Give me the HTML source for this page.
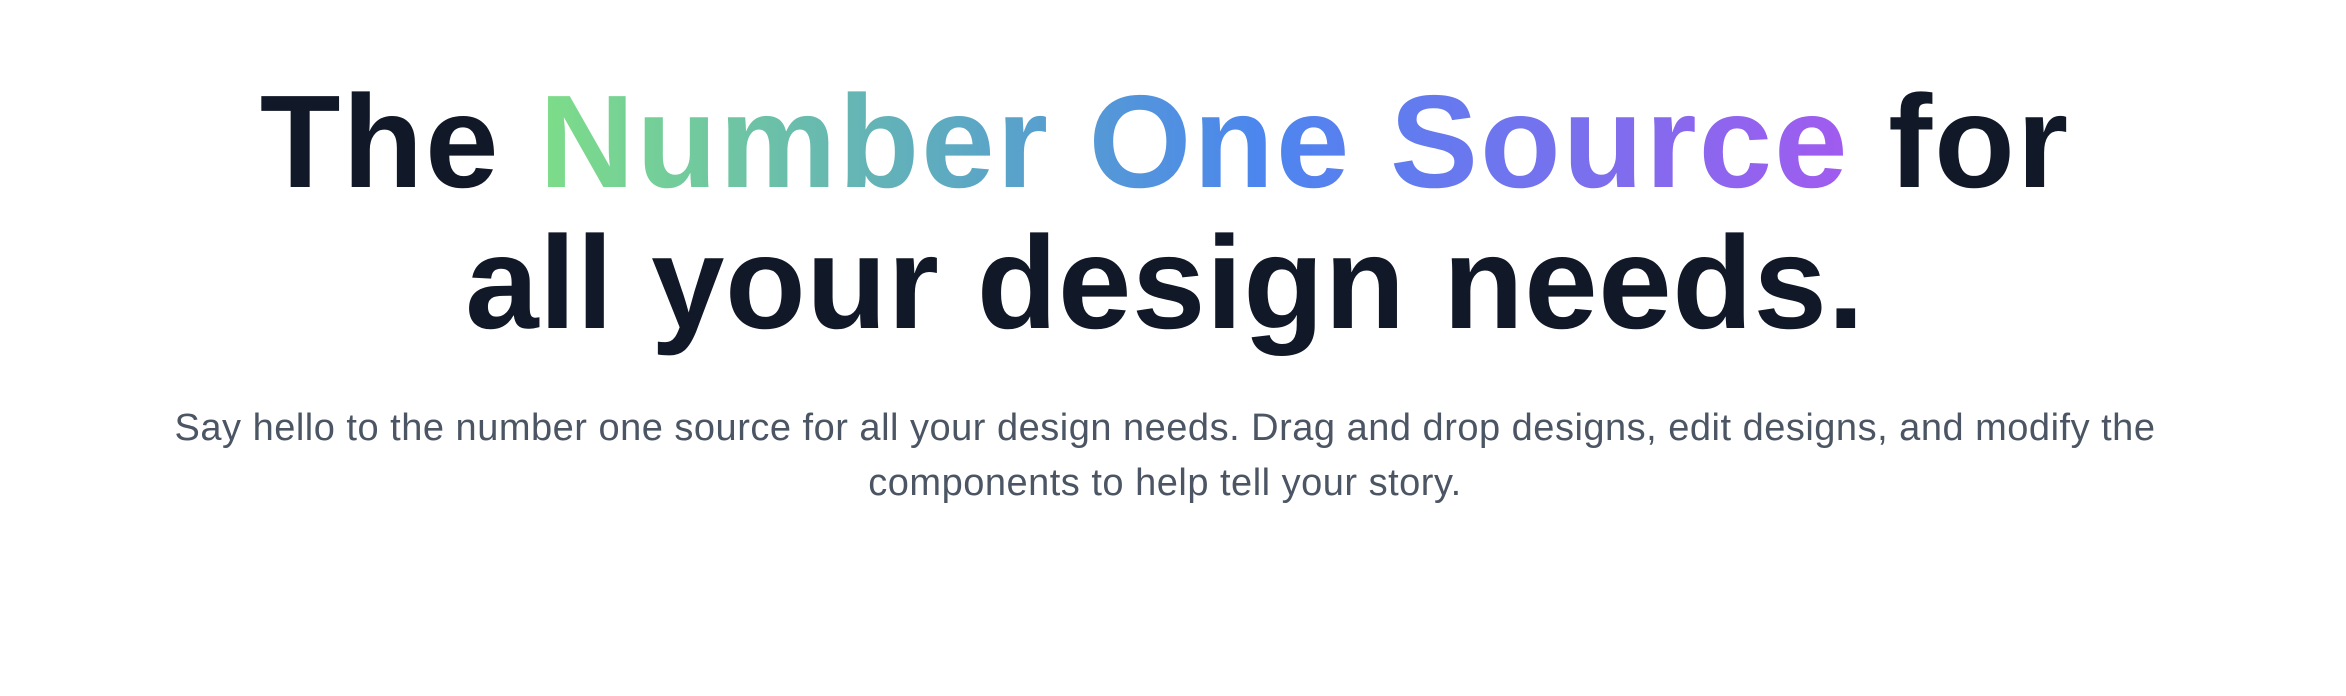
<!DOCTYPE html>
<html><head><style>
html,body{margin:0;padding:0;background:#fff;width:2346px;height:696px;overflow:hidden}
h1{position:absolute;left:0;width:2330px;top:71px;margin:0;text-align:center;font-family:"Liberation Sans",sans-serif;font-weight:700;font-size:132px;line-height:141px;letter-spacing:2px;color:#111827}
.l2{letter-spacing:0.6px}
.g{background:linear-gradient(90deg,#7ddd88 0%,#5aa4c8 35%,#4c86ee 55%,#7b6fee 80%,#a15bef 100%);-webkit-background-clip:text;background-clip:text;color:transparent}
p{position:absolute;left:0;width:2330px;top:401px;margin:0;text-align:center;font-family:"Liberation Sans",sans-serif;font-size:38px;line-height:55px;letter-spacing:0.5px;color:#4b5563}
</style></head><body>
<h1>The <span class="g">Number One Source</span> for<br><span class="l2">all your design needs.</span></h1>
<p>Say hello to the number one source for all your design needs. Drag and drop designs, edit designs, and modify the<br>components to help tell your story.</p>
</body></html>
